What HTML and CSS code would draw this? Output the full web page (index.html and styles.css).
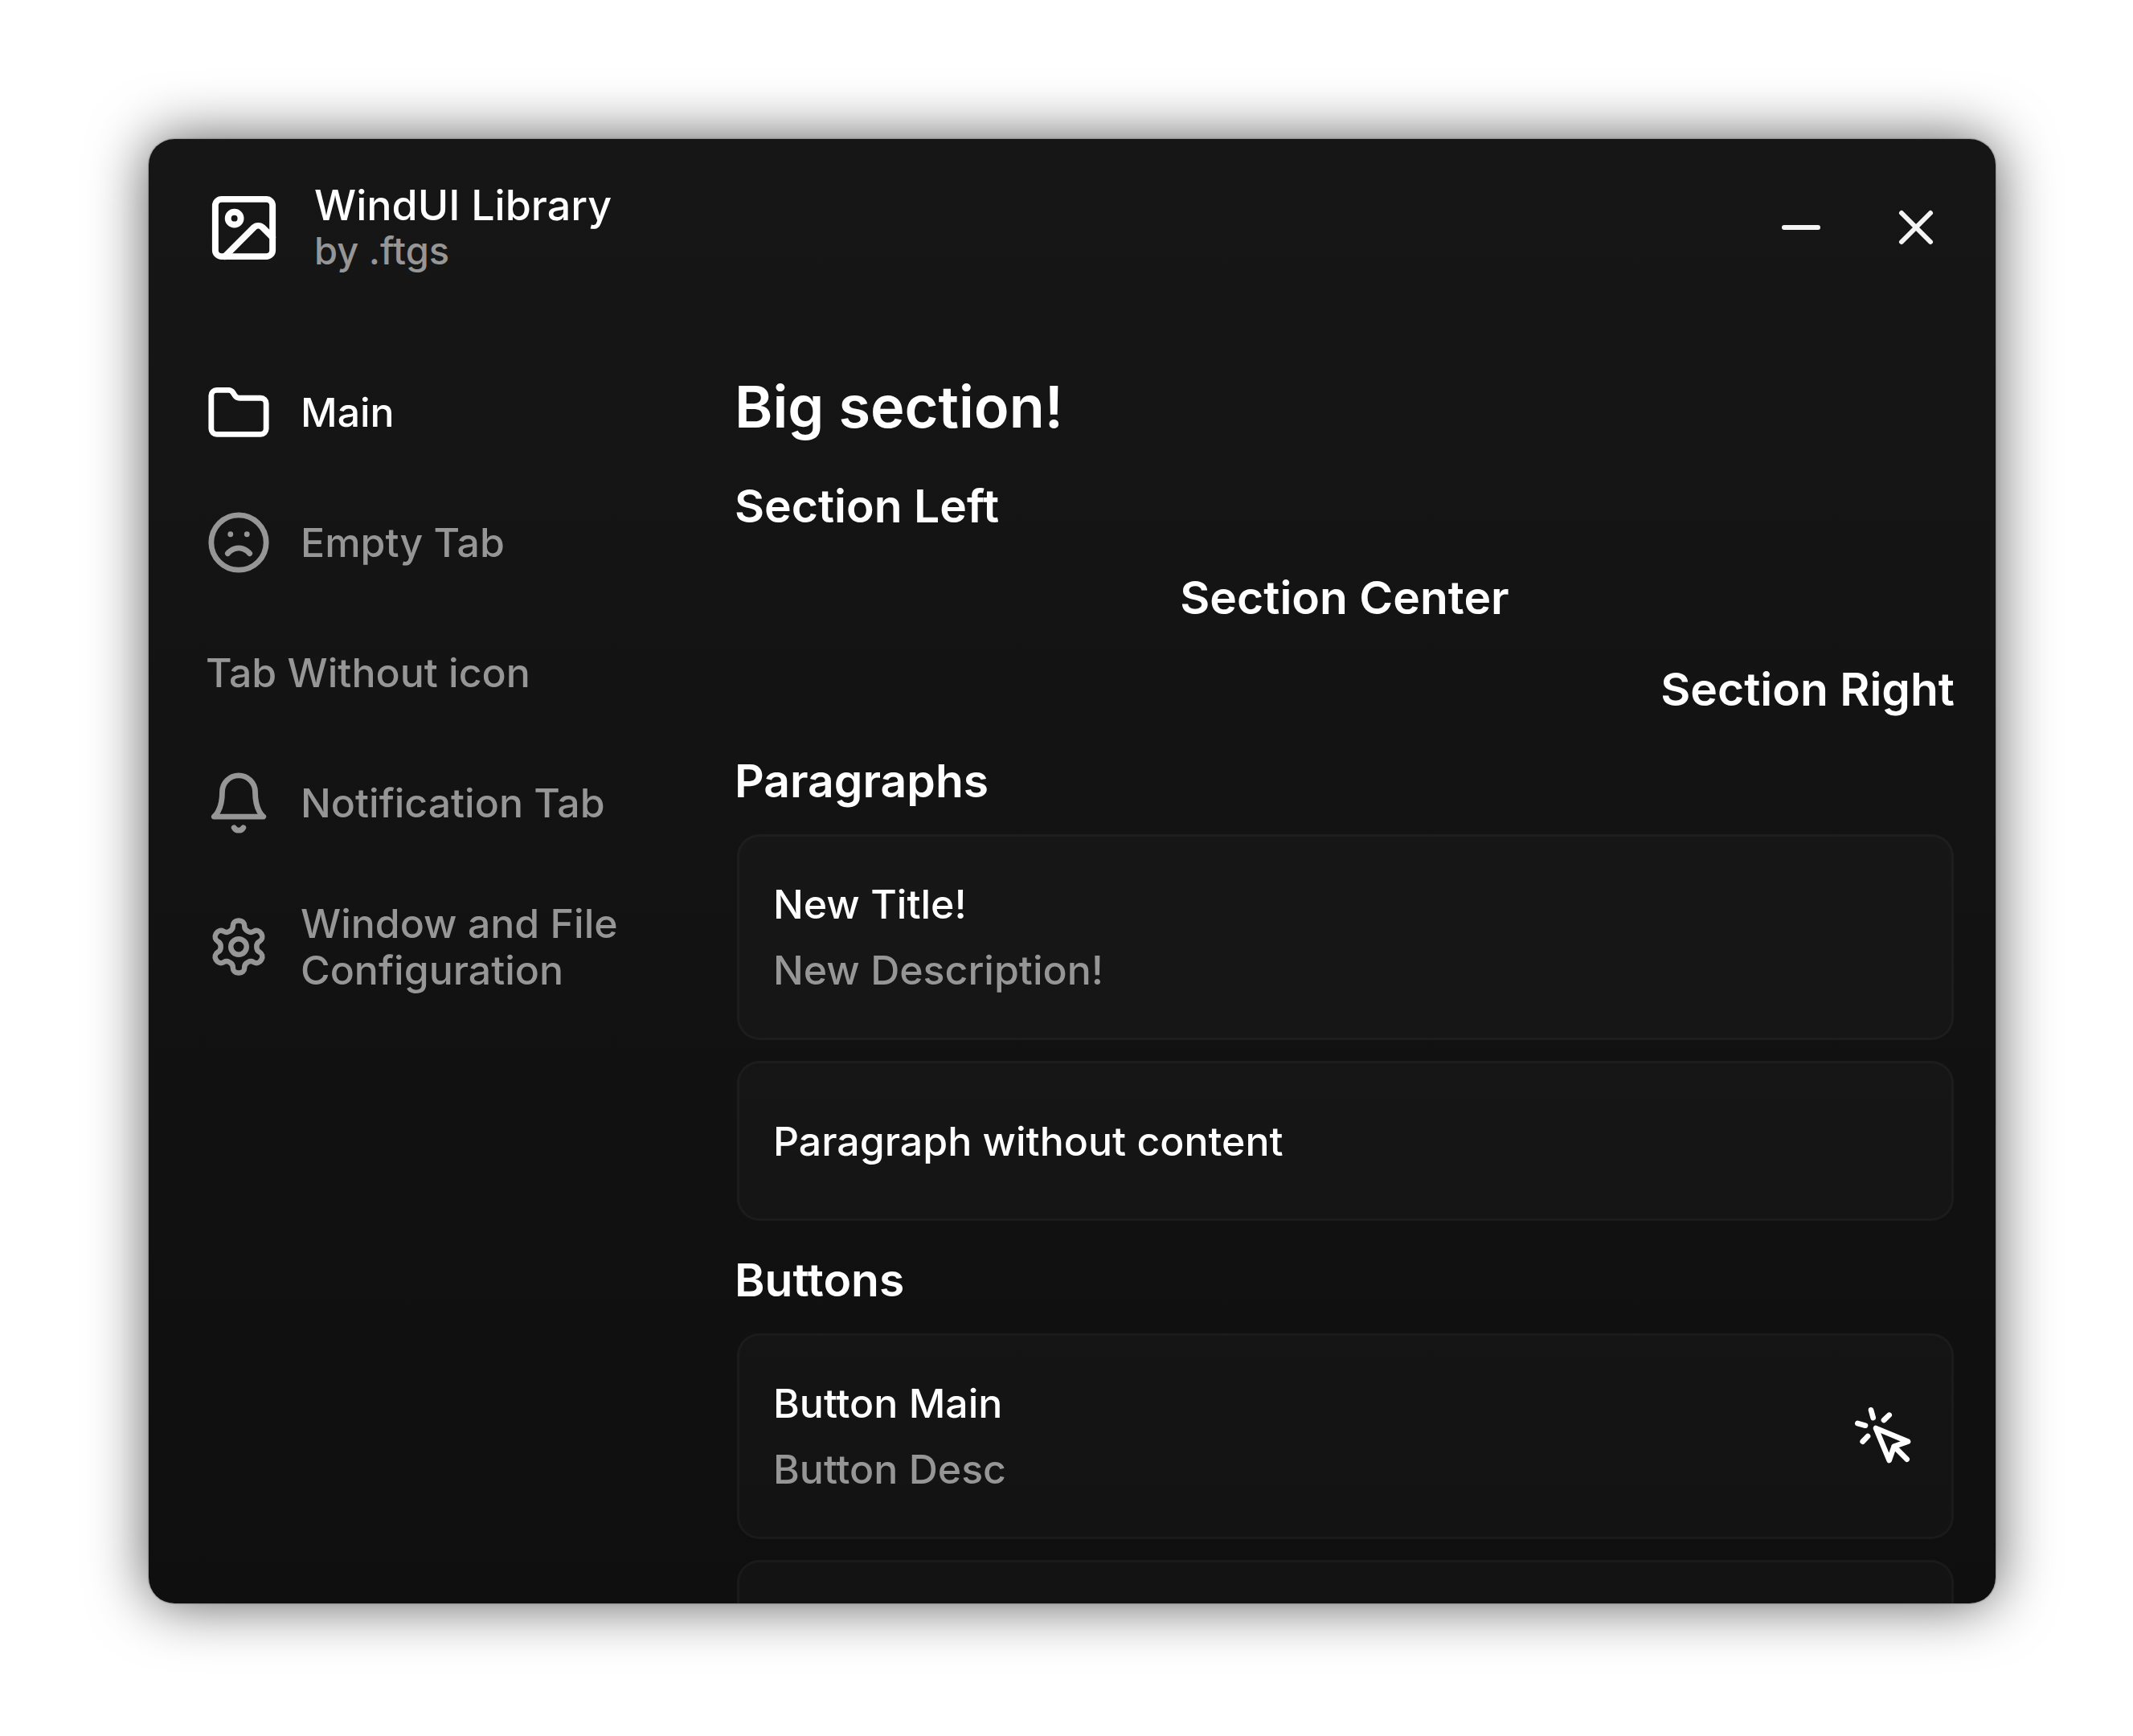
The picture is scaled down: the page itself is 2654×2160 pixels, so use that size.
FILE: index.html
```html
<!DOCTYPE html>
<html lang="en">
<head>
<meta charset="utf-8">
<meta name="viewport" content="width=device-width, initial-scale=1">
<title>WindUI Library</title>
<link rel="stylesheet" href="styles.css">
</head>
<body>
<div class="window">
  <header class="topbar">
    <svg class="logo" viewBox="0 0 24 24" aria-hidden="true"><rect x="3" y="3" width="18" height="18" rx="2"/><circle cx="9" cy="9" r="2"/><path d="m21 15-3.086-3.086a2 2 0 0 0-2.828 0L6 21"/></svg>
    <div class="heading">
      <h1 class="title">WindUI Library</h1>
      <p class="author">by .ftgs</p>
    </div>
    <div class="controls">
      <button class="control" type="button" aria-label="Minimize"><svg viewBox="0 0 24 24" aria-hidden="true"><path d="M5 12h14"/></svg></button>
      <button class="control" type="button" aria-label="Close"><svg viewBox="0 0 24 24" aria-hidden="true"><path d="M18 6 6 18M6 6l12 12"/></svg></button>
    </div>
  </header>
  <div class="body">
    <nav class="sidebar" aria-label="Tabs">
      <button class="tab tab-active" type="button"><svg class="icon" viewBox="0 0 24 24" aria-hidden="true"><path d="M20 20a2 2 0 0 0 2-2V8.8a2 2 0 0 0-2-2h-7.7a2 2 0 0 1-1.69-.9l-.7-1.1A2 2 0 0 0 8.2 3.9H4a2 2 0 0 0-2 2V18a2 2 0 0 0 2 2Z"/></svg><span>Main</span></button>
      <button class="tab" type="button"><svg class="icon" viewBox="0 0 24 24" aria-hidden="true"><circle cx="12" cy="12" r="10"/><path d="M16 16s-1.5-2-4-2-4 2-4 2M9 9h.01M15 9h.01"/></svg><span>Empty Tab</span></button>
      <button class="tab" type="button"><span>Tab Without icon</span></button>
      <button class="tab" type="button"><svg class="icon" viewBox="0 0 24 24" aria-hidden="true"><path d="M6 8a6 6 0 0 1 12 0c0 7 3 9 3 9H3s3-2 3-9M10.3 21a1.94 1.94 0 0 0 3.4 0"/></svg><span>Notification Tab</span></button>
      <button class="tab" type="button"><svg class="icon" viewBox="-0.6 -0.6 25.2 25.2" aria-hidden="true"><path d="M12.22 2h-.44a2 2 0 0 0-2 2v.18a2 2 0 0 1-1 1.73l-.43.25a2 2 0 0 1-2 0l-.15-.08a2 2 0 0 0-2.73.73l-.22.38a2 2 0 0 0 .73 2.73l.15.1a2 2 0 0 1 1 1.72v.51a2 2 0 0 1-1 1.74l-.15.09a2 2 0 0 0-.73 2.73l.22.38a2 2 0 0 0 2.73.73l.15-.08a2 2 0 0 1 2 0l.43.25a2 2 0 0 1 1 1.73V20a2 2 0 0 0 2 2h.44a2 2 0 0 0 2-2v-.18a2 2 0 0 1 1-1.73l.43-.25a2 2 0 0 1 2 0l.15.08a2 2 0 0 0 2.73-.73l.22-.39a2 2 0 0 0-.73-2.73l-.15-.08a2 2 0 0 1-1-1.74v-.5a2 2 0 0 1 1-1.74l.15-.09a2 2 0 0 0 .73-2.73l-.22-.38a2 2 0 0 0-2.73-.73l-.15.08a2 2 0 0 1-2 0l-.43-.25a2 2 0 0 1-1-1.73V4a2 2 0 0 0-2-2z"/><circle cx="12" cy="12" r="3"/></svg><span>Window and File Configuration</span></button>
    </nav>
    <main class="content">
      <h2 class="section section-big">Big section!</h2>
      <h3 class="section">Section Left</h3>
      <h3 class="section section-center">Section Center</h3>
      <h3 class="section section-right">Section Right</h3>
      <h3 class="section">Paragraphs</h3>
      <article class="card">
        <div class="card-text"><p class="card-title">New Title!</p><p class="card-desc">New Description!</p></div>
      </article>
      <article class="card">
        <div class="card-text"><p class="card-title">Paragraph without content</p></div>
      </article>
      <h3 class="section">Buttons</h3>
      <button class="card" type="button">
        <span class="card-text"><span class="card-title">Button Main</span><span class="card-desc">Button Desc</span></span>
        <svg class="card-icon" viewBox="0 0 24 24" aria-hidden="true"><path d="m9 9 5 12 1.8-5.2L21 14ZM15.8 15.8l4.8 4.8M7.2 2.2 8 5.1M5.1 8l-2.9-.8M14 4.1 12 6M6 12l-1.9 2"/></svg>
      </button>
      <button class="card" type="button" aria-label="Button"></button>
    </main>
  </div>
</div>
</body>
</html>
```
FILE: styles.css
```css
* {
  box-sizing: border-box;
  margin: 0;
}

body {
  display: flex;
  height: 100vh;
  padding: 173px 171px 165px 185px;
  background: #fff;
  color: #fff;
  font-family: Inter, "Liberation Sans", sans-serif;
  font-size: 50px;
  font-weight: 500;
  line-height: 58px;
}

button {
  border: 0;
  padding: 0;
  background: none;
  color: inherit;
  font: inherit;
  text-align: left;
  cursor: pointer;
}

svg {
  display: block;
  flex: none;
  fill: none;
  stroke: currentColor;
  stroke-width: 2;
  stroke-linecap: round;
  stroke-linejoin: round;
}

.window {
  display: flex;
  flex: 1;
  flex-direction: column;
  min-width: 0;
  overflow: hidden;
  border-radius: 32px;
  background: linear-gradient(#161616, #0f0f0f);
  box-shadow: 0 0 72px rgba(0, 0, 0, 0.66), 0 0 2px rgba(0, 0, 0, 0.6);
}

.topbar {
  display: flex;
  flex: none;
  align-items: center;
  gap: 40px;
  height: 220px;
  padding: 0 63px 0 71px;
}

.logo {
  width: 95px;
  height: 95px;
}

.heading {
  flex: 1;
}

.title {
  font-size: 52px;
  font-weight: 500;
  line-height: 58px;
}

.author {
  color: #969696;
  font-size: 47px;
  line-height: 54px;
}

.controls {
  display: flex;
  gap: 71px;
  color: #f4f4f4;
}

.control svg {
  width: 72px;
  height: 72px;
}

.body {
  display: flex;
  flex: 1;
  min-height: 0;
}

.sidebar {
  display: flex;
  flex: none;
  flex-direction: column;
  gap: 8px;
  width: 680px;
  padding: 43px 35px;
}

.tab {
  display: flex;
  align-items: center;
  gap: 36px;
  min-height: 154px;
  padding: 36px;
  color: #969696;
}

.tab-active {
  color: #fff;
}

.icon {
  width: 82px;
  height: 82px;
}

.content {
  display: flex;
  flex: 1;
  flex-direction: column;
  gap: 26px;
  min-width: 0;
  overflow: hidden;
  padding: 55px 51px 0 49px;
}

.section {
  flex: none;
  padding-top: 8px;
  font-size: 57px;
  font-weight: 600;
  line-height: 80px;
}

.section-big {
  font-size: 72px;
  line-height: 100px;
}

.section-center {
  text-align: center;
}

.section-right {
  text-align: right;
}

.card {
  display: flex;
  flex: none;
  align-items: center;
  justify-content: space-between;
  min-height: 199px;
  margin: 0 1px 0 3px;
  padding: 55px 44px 55px 42px;
  border: 3px solid rgba(255, 255, 255, 0.03);
  border-radius: 28px;
  background: rgba(255, 255, 255, 0.02);
}

.card-text {
  display: flex;
  flex-direction: column;
  gap: 24px;
}

.card-desc {
  color: #969696;
}

.card-icon {
  width: 80px;
  height: 80px;
}
```
